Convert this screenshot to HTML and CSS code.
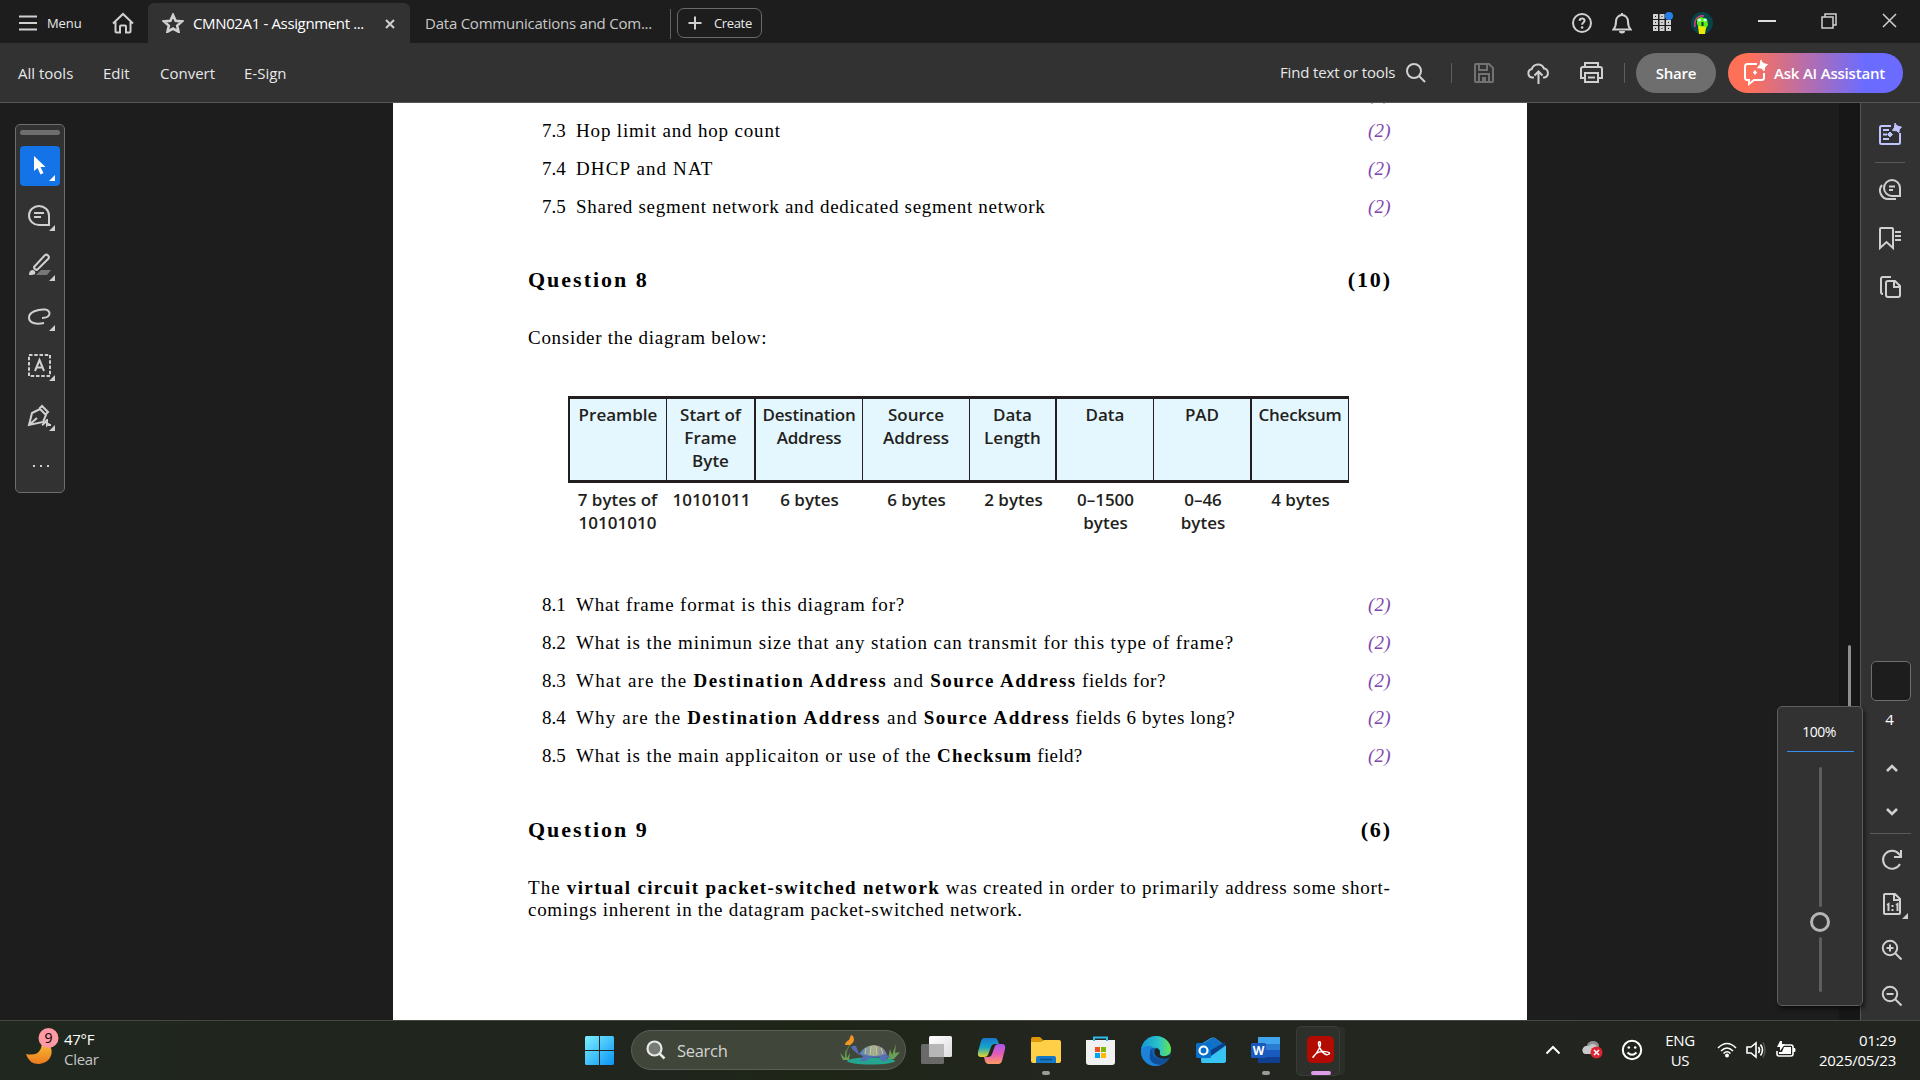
FILE: index.html
```
<!DOCTYPE html>
<html lang="en">
<head>
<meta charset="utf-8">
<title>CMN02A1 - Assignment</title>
<link rel="stylesheet" href="styles.css">
</head>
<body>
<div class="app">
  <header class="titlebar">
    <button class="menu"><svg width="18" height="16" viewBox="0 0 18 16"><path d="M0 1.500h18M0 8h18M0 14.500h18" class="ln w2"/></svg>Menu</button>
    <svg class="home" width="24" height="22" viewBox="0 0 24 22"><path d="M2 11.500 12 2l10 9.500M4.500 10v9.500q0 1 1 1H9v-6q0-1 1-1h4q1 0 1 1v6h3.500q1 0 1-1V10" class="ln w2"/></svg>
    <div class="tab active">
      <svg width="22" height="20" viewBox="0 0 22 20"><path d="m11 2 2.600 5.700 6.200.7-4.600 4.200 1.300 6.100L11 15.600l-5.500 3.100 1.300-6.100L2.200 8.400l6.200-.7z" class="ln w25"/></svg>
      <span class="tab-title">CMN02A1 - Assignment ...</span>
      <svg class="tab-x" width="10" height="10" viewBox="0 0 10 10"><path d="m1 1 8 8M9 1 1 9" class="ln w2"/></svg>
    </div>
    <div class="tab second">Data Communications and Com...</div>
    <button class="create"><svg width="14" height="14" viewBox="0 0 14 14"><path d="M7 .5v13M.5 7h13" class="ln w2"/></svg>Create</button>
    <div class="window-tools">
      <svg width="20" height="20" viewBox="0 0 20 20"><circle cx="10" cy="10" r="9" class="ln w2"/><path d="M7.600 7.800q.2-2.300 2.500-2.300t2.500 2.100c0 1.800-2.500 2-2.500 4.200" class="ln w2"/><circle cx="10.100" cy="14.500" r="1.300" class="fl"/></svg>
      <svg width="20" height="22" viewBox="0 0 20 22"><path d="M1.500 17.500q2.500-3 2.500-8a6 6.500 0 0 1 12 0q0 5 2.500 8zM10 3V1" class="ln w2"/><path d="M7 19h6a3 2.500 0 0 1-6 0z" class="fl"/></svg>
      <svg width="22" height="22" viewBox="0 0 22 22"><g class="ln w2"><path d="M3 5h3v3H3zM9.500 5h3v3h-3zM3 11h3v3H3zM9.500 11h3v3h-3zM16 11h3v3h-3zM3 17h3v3H3zM9.500 17h3v3h-3zM16 17h3v3h-3z"/></g><circle cx="18" cy="6" r="4" fill="#2680eb"/></svg>
      <svg width="22" height="22" viewBox="0 0 22 22"><circle cx="11" cy="11" r="11" fill="#06434b"/><path d="M4 15C3 7 7 3 13 4" stroke="#e0407a" stroke-width="1.500" fill="none"/><path d="M6 7l4-2 6 2 1 6-3 5-4 1-4-7z" fill="#5eee16"/><path d="M7 14l8 1-1 7H8z" fill="#eee900"/><circle cx="8.500" cy="8" r="1.600" fill="#bffcf0"/><circle cx="14" cy="8" r="1.600" fill="#bffcf0"/><path d="M10.500 10h2v4h-2z" fill="#083c29"/></svg>
    </div>
    <div class="window-controls">
      <svg width="18" height="18" viewBox="0 0 18 18"><path d="M0 9h18" stroke="#ddd" stroke-width="2"/></svg>
      <svg width="16" height="16" viewBox="0 0 16 16"><path d="M1 4h11v11H1zM4 4V1h11v11h-3" class="ln"/></svg>
      <svg width="15" height="15" viewBox="0 0 15 15"><path d="m1 1 13 13M14 1 1 14" class="ln"/></svg>
    </div>
  </header>

  <nav class="toolbar">
    <span class="m1">All tools</span><span class="m2">Edit</span><span class="m3">Convert</span><span>E-Sign</span>
    <div class="toolbar-right">
      <span class="find">Find text or tools</span>
      <svg class="mag" width="20" height="20" viewBox="0 0 20 20"><circle cx="8" cy="8" r="7" class="ln w2"/><path d="m13 13 6 6" class="ln w2"/></svg>
      <i class="sep s1"></i>
      <svg class="save" width="20" height="20" viewBox="0 0 20 20"><path d="M1 2q0-1 1-1h13l4 4v13q0 1-1 1H2q-1 0-1-1zM5 1v6h8V1M5 19v-8h10v8" fill="none" stroke="#727272" stroke-width="2"/><path d="M8 14h4v4H8z" fill="#727272"/></svg>
      <svg class="cloud" width="23" height="22" viewBox="0 0 23 22"><path d="M7 15.500H5.500a4.300 4.300 0 0 1-.7-8.500A6.500 6.500 0 0 1 17 6.500a4.600 4.600 0 0 1 .5 9H16M11.500 22V10M7.500 13.500l4-4 4 4" class="ln w2"/></svg>
      <svg class="print" width="23" height="21" viewBox="0 0 23 21"><path d="M5 5V1h13v4M5 16H1V7q0-2 2-2h17q2 0 2 2v9h-4M5 11h13v9H5zM8 15.500h7" class="ln w2"/></svg>
      <i class="sep s2"></i>
      <button class="share">Share</button>
      <button class="ai"><svg width="25" height="26" viewBox="0 0 25 26"><path d="M14 4H4.500Q2 4 2 6.500v11Q2 20 4.500 20H6v4l5-4h7.500q2.500 0 2.500-2.500V13" fill="none" stroke="#fff" stroke-width="2"/><path d="M18 0q1 4 6.500 4.500Q21 6 21 11q-2-4-6.500-3Q18 5 18 0zM12 10.500q.3 2 2 2-2 .4-2 2-.4-1.600-2-2 1.600-.4 2-2z" fill="#fff" stroke="#fff"/></svg>Ask AI Assistant</button>
    </div>
  </nav>

  <main class="workspace">
    <section class="canvas">
      <article class="page">
        <ol class="items top">
          <li class="cut"><em>(2)</em></li>
          <li><b class="no">7.3</b><span class="k8">Hop limit and hop count</span><em>(2)</em></li>
          <li><b class="no">7.4</b><span class="k11">DHCP and NAT</span><em>(2)</em></li>
          <li><b class="no">7.5</b><span class="k7">Shared segment network and dedicated segment network</span><em>(2)</em></li>
        </ol>
        <h2>Question 8<span>(10)</span></h2>
        <p class="intro k7">Consider the diagram below:</p>
        <div class="frame">
          <div class="cell">Preamble</div><div class="cell">Start of<br>Frame<br>Byte</div><div class="cell">Destination<br>Address</div><div class="cell">Source<br>Address</div><div class="cell">Data<br>Length</div><div class="cell">Data</div><div class="cell">PAD</div><div class="cell">Checksum</div>
          <div class="size">7 bytes of<br>10101010</div><div class="size">10101011</div><div class="size">6 bytes</div><div class="size">6 bytes</div><div class="size">2 bytes</div><div class="size">0–1500<br>bytes</div><div class="size">0–46<br>bytes</div><div class="size">4 bytes</div>
        </div>
        <ol class="items">
          <li><b class="no">8.1</b><span class="k8">What frame format is this diagram for?</span><em>(2)</em></li>
          <li><b class="no">8.2</b><span class="k9">What is the minimun size that any station can transmit for this type of frame?</span><em>(2)</em></li>
          <li><b class="no">8.3</b><span class="k12">What are the <strong class="k16">Destination Address</strong> and <strong class="k15">Source Address</strong><span class="k5"> fields for?</span></span><em>(2)</em></li>
          <li><b class="no">8.4</b><span class="k11">Why are the <strong class="k16">Destination Address</strong> and <strong class="k15">Source Address</strong><span class="k5"> fields 6 bytes long?</span></span><em>(2)</em></li>
          <li><b class="no">8.5</b><span class="k9">What is the main applicaiton or use of the <strong class="k12">Checksum</strong><span class="k3"> field?</span></span><em>(2)</em></li>
        </ol>
        <h2 class="q9">Question 9<span>(6)</span></h2>
        <p class="para"><span class="k11">The </span><strong class="k13">virtual circuit packet-switched network</strong><span class="k76"> was created in order to primarily address some short-</span><br><span class="k7">comings inherent in the datagram packet-switched network.</span></p>
      </article>

      <aside class="palette">
        <i class="grip"></i>
        <div class="tool on"><svg width="40" height="40" viewBox="0 0 40 40"><path d="M14 10v15l3.500-3 3 6.500 3-1.500-3-6h5z" fill="#fff"/><path d="M35 29v6h-6z" fill="#fff"/></svg></div>
        <div class="tool"><svg width="40" height="40" viewBox="0 0 40 40"><path d="M29 29H19a10 9.500 0 1 1 10-9.500zM14 17h10M14 21h7" class="ln w2"/><path d="M35 29v6h-6z" class="fl"/></svg></div>
        <div class="tool"><svg width="40" height="40" viewBox="0 0 40 40"><path d="M21 24h10l-4 5H16z" fill="#777"/><path d="m14 21 11-12q1.500-1 3 .5t.5 3L17 24q-3-.5-3-3z" class="ln w2"/><path d="M9 29q0-5 4-5 3 1 2 4-1 1-6 1z" class="fl"/><path d="M35 29v6h-6z" class="fl"/></svg></div>
        <div class="tool"><svg width="40" height="40" viewBox="0 0 40 40"><path d="M24 27C16 29 9 27 9 21.500S18 13 25 13.500c6 .5 7 8-3 8.500" class="ln w2"/><path d="M35 29v6h-6z" class="fl"/></svg></div>
        <div class="tool"><svg width="40" height="40" viewBox="0 0 40 40"><path d="M9 9h21v21H9z" class="ln w2" stroke-dasharray="3.500 1.750"/><path d="m15 25 4.500-11 4.500 11M16.500 21.500h6" class="ln w2"/><path d="M35 29v6h-6z" class="fl"/></svg></div>
        <div class="tool"><svg width="40" height="40" viewBox="0 0 40 40"><path d="m9 29 3-12 8-4 6 6-3 7zM9 29l8-7M19 13l3-3 6 6-3 3M22 29c4-2 4-5 5-5v5q2-2 2 0h2" class="ln w2"/><path d="M35 29v6h-6z" class="fl"/></svg></div>
        <div class="tool dots"><svg width="18" height="4" viewBox="0 0 18 4"><path d="M1 1h2v2H1zM8 1h2v2H8zM15 1h2v2h-2z" class="fl"/></svg></div>
      </aside>
    </section>
    <div class="track"><i class="thumb"></i></div>
    <aside class="side">
      <div class="side-top">
        <svg width="24" height="24" viewBox="0 0 24 24"><g fill="none" stroke="#c0c4ff" stroke-width="2"><path d="M13 4H3.500Q2 4 2 5.500v15Q2 22 3.500 22h17q1.500 0 1.500-1.500V11M5 8h6M5 12.500h4M5 17h6"/></g><path d="M17 1q1 3.500 6.500 4-3 2-2.500 5.500Q19 8 14.500 8.500 17 6 17 1zM12 10l2.500 2.500L12 15l-2.500-2.500z" fill="#c0c4ff" stroke="#c0c4ff"/></svg>
        <hr>
        <svg class="c2" width="24" height="22" viewBox="0 0 24 22"><path d="M22 17h-8a8 8 0 1 1 8-8zM11 7.500h6M11 11h4" class="ln w2"/><path d="M4 6C-1 12 4 20 10 20h8" class="ln w2"/></svg>
        <svg class="c3" width="24" height="24" viewBox="0 0 24 24"><path d="M2 3q0-1 1-1h11q1 0 1 1v19l-6.500-6L2 22zM17 6h6M17 10h6M17 14h6" class="ln w2"/></svg>
        <svg class="c4" width="24" height="24" viewBox="0 0 24 24"><path d="M13 2H5Q3 2 3 4v13q0 2 2 2M8 8q0-2 2-2h7l5 5v9q0 2-2 2H10q-2 0-2-2zM16 6v6h6" class="ln w2"/></svg>
      </div>
      <div class="side-bottom">
        <div class="pagebox"></div>
        <div class="pageno">4</div>
        <svg class="b1" width="14" height="9" viewBox="0 0 14 9"><path d="m2 7 5-5 5 5" class="ln w25"/></svg>
        <svg class="b2" width="14" height="9" viewBox="0 0 14 9"><path d="m2 2 5 5 5-5" class="ln w25"/></svg>
        <hr>
        <svg class="b3" width="22" height="22" viewBox="0 0 22 22"><path d="M19 15A9 9 0 1 1 18 5l2 2M20 1v7h-7" class="ln w2"/></svg>
        <svg class="b4" width="40" height="28" viewBox="0 0 40 28"><path d="M12 4q0-1 1-1h10l5 5v14q0 1-1 1H13q-1 0-1-1zM22 3v6h6M15 14l1.500-1v7M24 14l1.500-1v7M20.500 14v2M20.500 18v2" class="ln w2"/><path d="M36 22v6h-6z" class="fl"/></svg>
        <svg class="b5" width="22" height="22" viewBox="0 0 22 22"><circle cx="9" cy="9" r="7.200" class="ln w2"/><path d="m14.500 14.500 6 6M5.500 9h7M9 5.500v7" class="ln w2"/></svg>
        <svg class="b6" width="22" height="22" viewBox="0 0 22 22"><circle cx="9" cy="9" r="7.200" class="ln w2"/><path d="m14.500 14.500 6 6M5.500 9h7" class="ln w2"/></svg>
      </div>
    </aside>
    <div class="zoom"><div class="pct">100%</div><i class="bar up"></i><i class="knob"></i><i class="bar down"></i></div>
  </main>

  <footer class="taskbar">
    <div class="weather">
      <svg width="42" height="42" viewBox="0 0 42 42"><defs><linearGradient id="mo" x2="0" y2="1"><stop stop-color="#f8c63c"/><stop offset="1" stop-color="#ee7a1c"/></linearGradient></defs><path d="M4 27q11 2 14-4 3-5 1-10c16 4 13 23-2 24Q7 37 4 27z" fill="url(#mo)"/><circle cx="26.500" cy="11" r="10" fill="#ff99a4"/><text x="26.500" y="16" text-anchor="middle" class="badge">9</text></svg>
      <div><p>47°F</p><p class="dim">Clear</p></div>
    </div>
    <div class="apps">
      <svg class="start" width="30" height="30" viewBox="0 0 30 30"><defs><linearGradient id="wi" x2="1" y2="1"><stop stop-color="#7df0ff"/><stop offset="1" stop-color="#0a94f5"/></linearGradient></defs><path d="M1.500 0H14v14H0V1.500Q0 0 1.500 0zM15 0h12.500Q29 0 29 1.500V14H15zM0 15h14v14H1.500Q0 29 0 27.500zM15 15h14v12.500q0 1.500-1.500 1.500H15z" fill="url(#wi)"/></svg>
      <div class="search">
        <svg width="20" height="20" viewBox="0 0 20 20"><circle cx="8.500" cy="8.500" r="7" fill="#777b74" stroke="#e6e8ea" stroke-width="2.200"/><path d="m13.500 13.500 5 5" stroke="#e6e8ea" stroke-width="2.500"/></svg>
        <span>Search</span>
        <svg class="turtle" width="62" height="32" viewBox="0 0 62 32"><defs><linearGradient id="sh" x2="1"><stop stop-color="#4f7fc0"/><stop offset=".5" stop-color="#a8b08c"/><stop offset="1" stop-color="#6a78a8"/></linearGradient></defs><ellipse cx="32" cy="27" rx="24" ry="3.500" fill="#24a58f"/><path d="M4 26 1 19l5 5 0-9 2 9 3-5-1 7zM49 25l2-10 2 6 4-11-1 9 5-1-6 7z" fill="#6b9f56"/><path d="M7 24Q7 14 12 10" stroke="#5b8d45" fill="none"/><path d="M6 11q0-3 4-5l2-5 2 1q3 6-3 9z" fill="#f79422"/><path d="M20 20q5-8 17-8 9 1 11 9l4 2-5 1 1 3h-5l-3-4-10 1-3 3h-6l3-5-5-2-6-5q-2-4 4-3z" fill="#566eb4"/><path d="M21 20q3-8 14-9 10 1 13 9-12 4-27 0z" fill="url(#sh)"/><path d="m27 14-1 6M32 12l-1 9M37 12l1 9M42 14l2 6" stroke="#d7ca89" fill="none"/></svg>
      </div>
      <svg class="tv" width="31" height="30" viewBox="0 0 31 30"><defs><linearGradient id="tg" x2="1" y2="1"><stop stop-color="#fff"/><stop offset="1" stop-color="#ddd"/></linearGradient></defs><rect x="8" width="23" height="21" rx="1.500" fill="url(#tg)"/><rect y="8" width="23" height="20" rx="1.500" fill="#777" opacity=".85"/><path d="M8 8h15v13H8z" fill="#b7b7b7"/></svg>
      <svg class="cp" width="29" height="28" viewBox="0 0 29 28"><defs><linearGradient id="c1" x2="0" y2="1"><stop stop-color="#1878ce"/><stop offset=".5" stop-color="#17a6c6"/><stop offset="1" stop-color="#e8d62b"/></linearGradient><linearGradient id="c2" x2="0" y2="1"><stop stop-color="#a35af0"/><stop offset=".5" stop-color="#e45bb5"/><stop offset="1" stop-color="#ff9d63"/></linearGradient></defs><path d="M7 1h11q2 0 3 3l1 3h-4q-3 0-4 3l-3 8q-1 2-4 2H4q-4 0-3-5L4 4q1-3 3-3z" fill="url(#c1)"/><path d="M22 27H11q-2 0-3-3l-1-4h4q3 0 4-3l3-8q1-2 4-2h3q4 0 3 5l-3 12q-1 3-3 3z" fill="url(#c2)"/></svg>
      <div class="run"><svg width="30" height="30" viewBox="0 0 30 30"><path d="M0 3q0-2 2-2h7l3 3v6H0z" fill="#dc9807"/><path d="M0 6h10l3-2h15q2 0 2 2v19q0 2-2 2H2q-2 0-2-2z" fill="#ffcf48"/><path d="M5 27v-5q0-2 2-2h16q2 0 2 2v5z" fill="#1678c8"/><path d="M9 23.500h12" stroke="#07508e" stroke-width="1.500"/></svg><i></i></div>
      <svg class="st" width="30" height="30" viewBox="0 0 30 30"><path d="M0 4h29v22q0 3-3 3H3q-3 0-3-3z" fill="#f1f1f1"/><path d="M8 5V1.500h13V5" fill="none" stroke="#31b9e9" stroke-width="2"/><path d="M9 11h5v5H9z" fill="#f25022"/><path d="M15 11h5v5h-5z" fill="#7fba00"/><path d="M9 17h5v5H9z" fill="#00a4ef"/><path d="M15 17h5v5h-5z" fill="#ffb900"/></svg>
      <svg class="ed" width="30" height="30" viewBox="0 0 30 30"><defs><linearGradient id="e1"><stop stop-color="#1497d5"/><stop offset=".6" stop-color="#2bc3c8"/><stop offset="1" stop-color="#66e44b"/></linearGradient></defs><circle cx="15" cy="15" r="15" fill="#0f64b4"/><path d="M0 14C1 5 8 0 15 0c9 0 15 7 15 13s-5 8-9 7c-3-1-3-2-2-4 0-4-4-5-7-4Q6 8 0 14z" fill="url(#e1)"/><path d="M0 14q5-6 12-3-5 4-1 11 4 6 9 7C8 33-1 24 0 14z" fill="#1c83da"/><path d="M12 12c-3 5 2 12 9 11 3 0 5-1 7-2-5 12-22 9-19-4 0-3 1-4 3-5z" fill="#104f9b"/><path d="M14 13q4-2 5 3-1 3 2 4 4 1 9-2l-2 4q-7 2-12-1-4-4-2-8z" fill="#20251d"/></svg>
      <svg class="ou" width="30" height="30" viewBox="0 0 30 30"><path d="M5 8 15 2q2-1 4 0l11 8v14q0 3-3 3H7q-2 0-2-2z" fill="#39bff0"/><path d="M6 8 16 2q2-1 4 1l9 6-15 10z" fill="#1270c7"/><path d="m15 14 14-8v4L15 20z" fill="#093f88"/><path d="m5 27 25-14v11q0 3-3 3z" fill="#36c4f3"/><rect y="7" width="15" height="15" rx="1.500" fill="#0870cc"/><circle cx="7.500" cy="14.500" r="4" fill="none" stroke="#fff" stroke-width="2.200"/></svg>
      <div class="run wo"><svg width="30" height="30" viewBox="0 0 30 30"><path d="M7 1h22v7H7z" fill="#41a5ee"/><path d="M7 8h22v6H7z" fill="#2b7cd3"/><path d="M7 14h22v7H7z" fill="#185abd"/><path d="M7 21h22v6H7z" fill="#103f91"/><rect y="7" width="15" height="15" rx="1.500" fill="#185abd"/><text x="7.500" y="18.500" text-anchor="middle" class="w">W</text></svg><i></i></div>
      <div class="acro"><svg width="28" height="28" viewBox="0 0 28 28"><rect width="27" height="27" rx="5" fill="#b30b00"/><path d="M13 6c-3-1-1 5 1 8s5 6 8 4-8-4-12-1-5 6-3 3C10 17 15 9 13 6z" fill="none" stroke="#fff" stroke-width="1.500"/></svg><i></i></div>
    </div>
    <div class="tray">
      <svg width="16" height="10" viewBox="0 0 16 10"><path d="m1.500 8.500 6.500-6.500 6.500 6.500" class="wh"/></svg>
      <svg class="t2" width="22" height="18" viewBox="0 0 22 18"><ellipse cx="11" cy="5" rx="6" ry="5" fill="#919191"/><path d="M3 13q-4-2-2-6 2-3 6-2 3-4 8 0l2 8z" fill="#c9c9c9"/><circle cx="14.500" cy="11.500" r="6" fill="#dc2532"/><path d="m12 9 5 5M17 9l-5 5" stroke="#fff" stroke-width="1.500"/></svg>
      <svg class="t3" width="22" height="22" viewBox="0 0 22 22"><circle cx="11" cy="11" r="9.200" class="wh"/><path d="M6.500 13.500q4.500 4.500 9 0" class="wh"/><circle cx="7.800" cy="8.500" r="1.300" fill="#fff"/><circle cx="14.200" cy="8.500" r="1.300" fill="#fff"/></svg>
      <div class="lang"><p>ENG</p><p>US</p></div>
      <svg class="t4" width="20" height="16" viewBox="0 0 20 16"><path d="M1 6q9-9 18 0M4 9q6-6 12 0M6.500 11.500q3.500-3.500 7 0" class="wh thin"/><circle cx="10" cy="13.500" r="2" fill="#fff"/></svg>
      <svg class="t5" width="20" height="18" viewBox="0 0 20 18"><path d="M1 6h4l5-4v14l-5-4H1zM12.500 6q2 3 0 6" class="wh thin"/><path d="M14.500 3.500q4 5.500 0 11" class="wh thin"/><path d="M17 1.500q4 7.500 0 15" stroke="#555" stroke-width="1.500" fill="none"/></svg>
      <svg class="t6" width="20" height="18" viewBox="0 0 20 18"><path d="M6 4h9q2 0 2 2v7q0 2-2 2H3q-2 0-2-2v-3" class="wh thin"/><path d="M8 6h7v7H3v-2h3zM17 7h2q1 2 0 4h-2zM4 0h2v3h3L4 10V6H1z" fill="#fff"/></svg>
      <div class="clock"><p>01:29</p><p class="date">2025/05/23</p></div>
    </div>
  </footer>
</div>
</body>
</html>
```
FILE: styles.css
```
*{box-sizing:border-box}
body{margin:0;overflow:hidden;background:#1d1d1d;color:#e8e8e8;font:15px "Open Sans","Noto Sans",sans-serif}
p,h2,ol{margin:0;padding:0}
li{list-style:none}
svg{display:block;flex:none}
button{font:inherit;color:inherit;border:0;background:none;padding:0;display:flex;align-items:center;white-space:nowrap}
.ln{fill:none;stroke:#d0d0d0;stroke-width:1.500}
.w2{stroke-width:2}
.w25{stroke-width:2.600}
.fl{fill:#d0d0d0}
.app{width:1920px;height:1080px;display:grid;grid-template-rows:43px 60px 917px 60px}

.titlebar{display:flex;background:#1d1d1d;padding-left:19px}
.menu{width:92px;gap:10px;font-size:13px;padding-top:3px;letter-spacing:-.1px}
.home{margin-top:12px}
.tab{display:flex;align-items:center;white-space:nowrap}
.tab.active{width:262px;margin:3px 0 0 13px;background:#323232;border-radius:6px 6px 0 0;padding-left:14px;color:#fff}
.tab-title{margin-left:9px;width:192px;letter-spacing:-.360px}
.tab-x{margin-top:1px}
.tab.second{width:261px;margin:9px 0 4px;padding:0 0 3px 15px;border-right:1px solid #606060;letter-spacing:-.230px;color:#c8c8c8}
.create{width:85px;height:30px;margin:8px 0 0 6px;border:1.500px solid #6a6a6a;border-radius:7px;padding-left:10px;gap:12px;font-size:13px;letter-spacing:-.350px}
.window-tools{display:flex;align-items:center;gap:20px;margin-left:auto;width:143px;padding-top:3px}
.window-tools svg:nth-child(3){margin:-4px -1px 0 -1px}
.window-tools svg:nth-child(4){margin-left:-1px}
.window-controls{display:flex;align-items:center;width:162px;margin-left:43px;gap:45px;padding-bottom:2px}

.toolbar{display:flex;align-items:center;background:#323232;border-bottom:1px solid #565656;padding:0 17px 0 18px;white-space:nowrap}
.m1{width:85px}.m2{width:57px}.m3{width:84px}
.toolbar-right{display:flex;align-items:center;margin-left:auto;width:623px}
.find{width:126px;letter-spacing:-.150px;padding-bottom:2px}
.sep{width:1px;height:20px;background:#5e5e5e}
.s1{margin:0 22px 0 25px}
.cloud{margin-left:33px}
.print{margin-left:30px}
.s2{margin:0 11px 0 21px}
.share{width:80px;height:40px;justify-content:center;border-radius:20px;background:#6e6e6e;color:#fff;font-weight:600;letter-spacing:-.200px}
.ai{width:175px;height:40px;margin-left:12px;border-radius:20px;padding-left:15px;gap:6px;color:#fff;font-weight:600;letter-spacing:-.200px;background:linear-gradient(90deg,#ff7059 12%,#6b6cff 78%)}

.workspace{display:flex;position:relative;overflow:hidden}
.canvas{width:1839px;padding-left:393px;position:relative;background:#1d1d1d}
.page{width:1134px;height:917px;background:#fff;color:#000;padding:0 136px 0 135px;overflow:hidden;font:19px/24px "Liberation Serif",serif}
.items{height:190px}
.items.top{margin-top:-29px}
.items li{display:flex;height:37.750px;line-height:38px;padding-left:14px;white-space:nowrap}
.top li{height:38px}
.items .cut{line-height:40px}
.no{font-weight:400;width:34px}
.items em{margin-left:auto;color:#8048ae;letter-spacing:.300px}
h2{display:flex;justify-content:space-between;font:bold 22px/30px "Liberation Serif",serif;letter-spacing:2px}
.top+h2{margin-top:1px}
h2 span{letter-spacing:1.900px;margin-right:-1px}
.intro{margin-top:31px}
.frame{display:grid;grid-template-columns:99px 89px 107px 107px 87px 97px 98px 97px;width:781px;margin:46px 0 0 40px;color:#231f20;font:600 17px/23px "Open Sans",sans-serif;text-align:center;white-space:nowrap}
.cell{height:87px;background:#e4f6fe;border:solid #231f20;border-width:3px 1px 3px 0;padding-top:4px}
.cell:first-child{border-left-width:2px}
.cell:nth-child(2),.cell:nth-child(5),.cell:nth-child(7){border-right-width:2px}
.cell:nth-child(3),.cell:nth-child(8){letter-spacing:-.200px}
.size{padding-top:5px}
.frame+.items{margin-top:52px}
.q9{margin-top:39px}
.para{margin-top:32px;line-height:22.400px;white-space:nowrap}
.k3{letter-spacing:.350px}.k5{letter-spacing:.580px}.k7{letter-spacing:.710px}.k76{letter-spacing:.770px}.k8{letter-spacing:.830px}.k9{letter-spacing:.900px}.k11{letter-spacing:1.130px}.k12{letter-spacing:1.200px}.k13{letter-spacing:1.370px}.k15{letter-spacing:1.500px}.k16{letter-spacing:1.640px}

.palette{position:absolute;left:15px;top:21px;width:50px;height:369px;border:1px solid #6e6e6e;border-radius:5px;background:#323232;display:flex;flex-direction:column;align-items:center;gap:10px}
.grip{width:40px;height:5px;border-radius:3px;background:#6e6e6e;margin:5px 0 1px}
.tool{width:40px;height:40px;border-radius:4px}
.tool.on{background:#1473e6}
.dots{display:grid;place-items:center}
.dots svg{margin-left:2px}
.track{width:21px;background:#171717;padding:542px 0 0 9px}
.thumb{display:block;width:3px;height:110px;border-radius:2px;background:#8f8f8f}
.side{width:60px;background:#323232;border-left:1px solid #565656;display:flex;flex-direction:column;align-items:center}
.side hr{width:30px;height:1px;border:0;margin:0;background:#5a5a5a}
.side-top{height:558px;padding:19px 1px 0 0;display:flex;flex-direction:column;align-items:center}
.side-top hr{margin:16px 0}
.c3{margin-top:25px}.c4{margin-top:25px}
.side-bottom{display:flex;flex-direction:column;align-items:center}
.side-bottom hr{width:41px;margin-top:17px}
.side-bottom svg{margin-left:2px}
.pagebox{width:40px;height:40px;border:1px solid #6e6e6e;border-radius:5px;background:#1d1d1d}
.pageno{font-size:15px;height:20px;line-height:20px;margin:8px 2px 0 0;color:#fff}
.b1{margin-top:35px}.b2{margin-top:34px}.b3{margin-top:15px}.b4{margin-top:20px}.b5{margin-top:20px}.b6{margin-top:24px}
.zoom{position:absolute;left:1777px;top:603px;width:86px;height:300px;background:#323232;border:1px solid #5e5e5e;border-radius:5px;box-shadow:2px 3px 4px #0008;display:flex;flex-direction:column;align-items:center}
.pct{width:67px;height:45px;border-bottom:1px solid #378ef0;text-align:center;color:#fff;font-size:14px;line-height:50px;letter-spacing:-.500px;padding-right:2px}
.bar{width:3px;border-radius:2px;background:#5e5e5e}
.up{height:140px;margin-top:15px}.down{height:55px}
.knob{width:20px;height:20px;border:3px solid #b5b5b5;border-radius:50%;margin:5px 0}

.taskbar{display:flex;background:linear-gradient(90deg,#20271f,#20251d 35%,#1e2617 42%,#23251f 55%,#22241f);border-top:1px solid #434840;color:#fff}
.weather{display:flex;width:585px;padding:6px 0 0 22px;line-height:20px}
.weather p{letter-spacing:-.300px}
.weather div{padding-top:2px}
.dim{color:#c4c4c4}
.badge{font:14px "Open Sans",sans-serif;fill:#000}
.apps{display:flex;align-items:center;width:761px}
.search{display:flex;align-items:center;width:275px;height:40px;margin:-1px 0 0 16px;border:1px solid #5b6056;border-radius:20px;background:#41463b;padding-left:14px;color:#d2d4d0;font-size:16.500px}
.search span{width:173px;padding-left:11px;letter-spacing:-.300px}
.tv{margin-left:15px}.cp{margin-left:25px}
.run{position:relative;margin-left:25px}
.run i,.acro i{position:absolute;left:11px;bottom:-9px;width:8px;height:4px;border-radius:2px;background:#9a9a9a}
.st{margin-left:25px}.ed{margin-left:25px}.ou{margin-left:25px}
.w{font:bold 12px "Open Sans",sans-serif;fill:#fff}
.acro{position:relative;width:44px;height:50px;margin-left:15px;padding:9px 0 0 10px;border-radius:5px;background:#2e312b;border:1px solid #3a3d37;box-shadow:6px 0 0 -1px #2b2e28}
.acro i{left:14px;bottom:0;width:20px;background:#dc9ee8}
.tray{display:flex;align-items:center;margin-left:auto;width:375px;padding-bottom:1px}
.wh{fill:none;stroke:#fff;stroke-width:2}
.thin{stroke-width:1.600}
.t2{margin-left:21px}.t3{margin-left:17px}.t4{margin-left:22px}.t5{margin-left:9px}.t6{margin-left:10px}
.lang{width:30px;margin-left:22px;text-align:center;line-height:20px;letter-spacing:-.400px}
.clock{margin-left:auto;width:104px;padding-right:24px;text-align:right;line-height:20px;letter-spacing:-.260px}
```
